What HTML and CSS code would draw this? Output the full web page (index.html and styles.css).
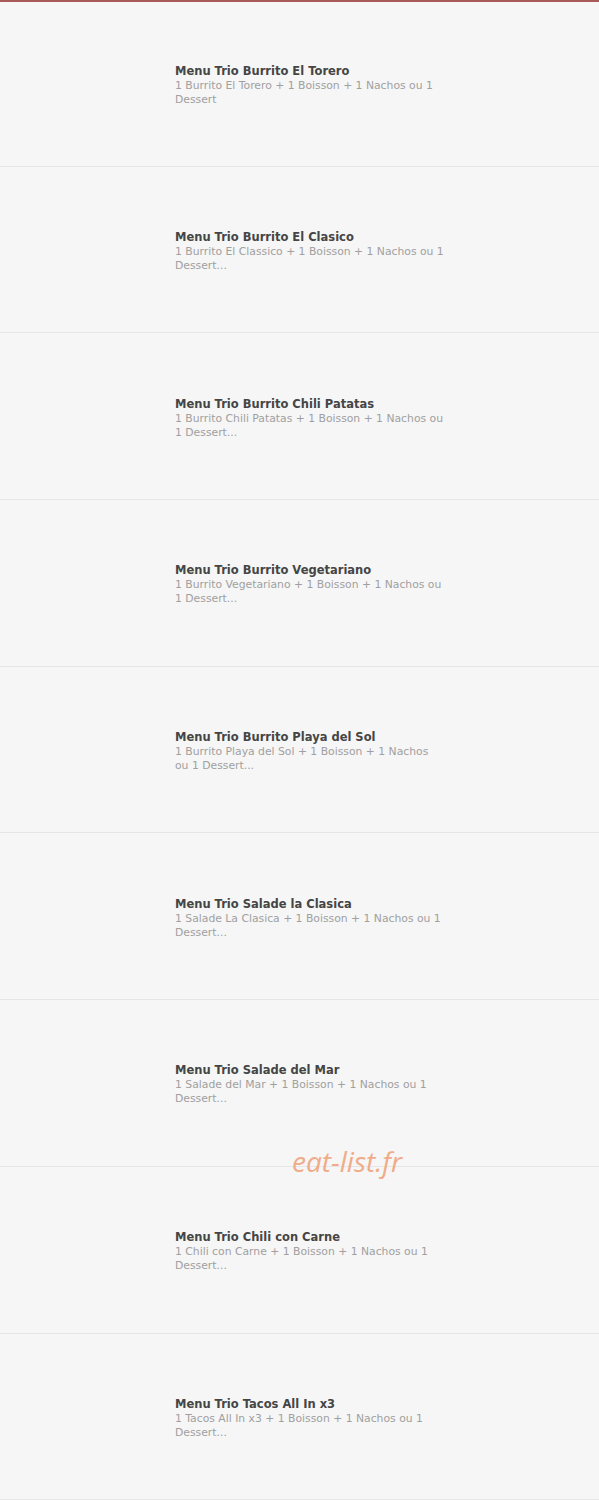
FILE: index.html
```html
<!DOCTYPE html>
<html lang="fr">
<head>
    <meta charset="utf-8">
    <link rel="stylesheet" href="styles.css">
</head>
<body>
    <div class="menu-list">
        <div class="menu-item">
            <div class="menu-thumb"></div>
            <div class="menu-info">
                <h3>Menu Trio Burrito El Torero</h3>
                <p>1 Burrito El Torero + 1 Boisson + 1 Nachos ou 1 Dessert</p>
            </div>
        </div>
        <div class="menu-item">
            <div class="menu-thumb"></div>
            <div class="menu-info">
                <h3>Menu Trio Burrito El Clasico</h3>
                <p>1 Burrito El Classico + 1 Boisson + 1 Nachos ou 1 Dessert...</p>
            </div>
        </div>
        <div class="menu-item">
            <div class="menu-thumb"></div>
            <div class="menu-info">
                <h3>Menu Trio Burrito Chili Patatas</h3>
                <p>1 Burrito Chili Patatas + 1 Boisson + 1 Nachos ou 1 Dessert...</p>
            </div>
        </div>
        <div class="menu-item">
            <div class="menu-thumb"></div>
            <div class="menu-info">
                <h3>Menu Trio Burrito Vegetariano</h3>
                <p>1 Burrito Vegetariano + 1 Boisson + 1 Nachos ou 1 Dessert...</p>
            </div>
        </div>
        <div class="menu-item">
            <div class="menu-thumb"></div>
            <div class="menu-info">
                <h3>Menu Trio Burrito Playa del Sol</h3>
                <p>1 Burrito Playa del Sol + 1 Boisson + 1 Nachos ou 1 Dessert...</p>
            </div>
        </div>
        <div class="menu-item">
            <div class="menu-thumb"></div>
            <div class="menu-info">
                <h3>Menu Trio Salade la Clasica</h3>
                <p>1 Salade La Clasica + 1 Boisson + 1 Nachos ou 1 Dessert...</p>
            </div>
        </div>
        <div class="menu-item">
            <div class="menu-thumb"></div>
            <div class="menu-info">
                <h3>Menu Trio Salade del Mar</h3>
                <p>1 Salade del Mar + 1 Boisson + 1 Nachos ou 1 Dessert...</p>
            </div>
        </div>
        <div class="menu-item">
            <div class="menu-thumb"></div>
            <div class="menu-info">
                <h3>Menu Trio Chili con Carne</h3>
                <p>1 Chili con Carne + 1 Boisson + 1 Nachos ou 1 Dessert...</p>
            </div>
        </div>
        <div class="menu-item">
            <div class="menu-thumb"></div>
            <div class="menu-info">
                <h3>Menu Trio Tacos All In x3</h3>
                <p>1 Tacos All In x3 + 1 Boisson + 1 Nachos ou 1 Dessert...</p>
            </div>
        </div>
    </div>
    <div class="watermark">eat-list.fr</div>
</body>
</html>
```

FILE: styles.css
```css
/* General Styles */
* {
    margin: 0;
    padding: 0;
    box-sizing: border-box;
}

body {
    background: #f6f6f6;
    font-family: "DejaVu Sans", "Open Sans", sans-serif;
    position: relative;
    height: 1500px;
    overflow: hidden;
}

/* List */
.menu-list {
    border-top: 2px solid #a85a58;
}

.menu-item {
    display: flex;
    align-items: center;
    height: 166.7px;
    border-bottom: 1px solid #e6e6e6;
}

.menu-item:first-child {
    height: 164.7px;
}

.menu-thumb {
    width: 175px;
    flex-shrink: 0;
}

.menu-info {
    width: 269.5px;
    padding-top: 3px;
}

.menu-info h3 {
    font-size: 11.5px;
    font-weight: bold;
    color: #454545;
    line-height: 16px;
}

.menu-info p {
    font-size: 10.8px;
    color: #a0a0a0;
    line-height: 14px;
}

/* Watermark */
.watermark {
    position: absolute;
    left: 292px;
    top: 1142px;
    font-family: "Open Sans", sans-serif;
    font-style: italic;
    font-size: 28px;
    color: #f0a47c;
    opacity: 0.9;
}
```
